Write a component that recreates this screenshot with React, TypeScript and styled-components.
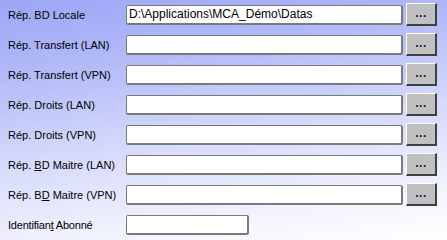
import React from 'react';
import styled, { createGlobalStyle } from 'styled-components';

const GlobalStyle = createGlobalStyle`
  html, body {
    margin: 0;
    padding: 0;
  }
  body {
    font-family: 'Liberation Sans', Arial, sans-serif;
  }
`;

type Field = {
  before: string;
  key?: string;
  after: string;
  value?: string;
  browse?: boolean;
  short?: boolean;
};

const fields: Field[] = [
  { before: 'Rép. BD Locale', after: '', value: 'D:\\Applications\\MCA_Démo\\Datas', browse: true },
  { before: 'Rép. Transfert (LAN)', after: '', browse: true },
  { before: 'Rép. Transfert (VPN)', after: '', browse: true },
  { before: 'Rép. Droits (LAN)', after: '', browse: true },
  { before: 'Rép. Droits (VPN)', after: '', browse: true },
  { before: 'Rép. ', key: 'B', after: 'D Maitre (LAN)', browse: true },
  { before: 'Rép. B', key: 'D', after: ' Maitre (VPN)', browse: true },
  { before: 'Identifian', key: 't', after: ' Abonné', short: true },
];

const App = (): React.ReactElement => (
  <Page>
    <GlobalStyle />
    {fields.map((f) => (
      <Row key={f.before + f.after}>
        <Label narrow={f.short}>
          {f.before}
          {f.key && <Access>{f.key}</Access>}
          {f.after}
        </Label>
        <TextBox short={f.short}>{f.value}</TextBox>
        {f.browse && <Browse>...</Browse>}
      </Row>
    ))}
  </Page>
);

const Page = styled.div`
  width: 447px;
  height: 240px;
  box-sizing: border-box;
  padding: 3px 10px 0 8px;
  display: flex;
  flex-direction: column;
  gap: 7px;
  background: linear-gradient(172deg, #9ca6f6 0%, #b2baf8 25%, #d6dafb 55%, #f4f5fe 85%, #ffffff 100%);
  overflow: hidden;
`;

const Row = styled.div`
  display: grid;
  grid-template-columns: 115px 1fr 31px;
  column-gap: 3px;
  align-items: center;
  height: 23px;
`;

const Label = styled.div<{ narrow?: boolean }>`
  font-size: 11px;
  color: #000;
  white-space: nowrap;
  font-family: ${({ narrow }) =>
    narrow ? "'Liberation Sans Narrow', 'Liberation Sans', Arial, sans-serif" : "'Liberation Sans', Arial, sans-serif"};
  letter-spacing: ${({ narrow }) => (narrow ? '-0.2px' : '0')};
`;

const Access = styled.span`
  text-decoration: underline;
`;

const TextBox = styled.div<{ short?: boolean }>`
  height: 20px;
  box-sizing: border-box;
  width: ${({ short }) => (short ? '123px' : 'auto')};
  background: #fff;
  border: 1px solid #7a7a7a;
  border-width: 1px 2px 2px 1px;
  border-radius: 2px;
  padding: 0 2px;
  font-size: 12px;
  line-height: 17px;
  color: #000;
  white-space: nowrap;
  overflow: hidden;
`;

const Browse = styled.div`
  height: 23px;
  box-sizing: border-box;
  background: #c0c0c0;
  border-top: 1px solid #fff;
  border-left: 1px solid #fff;
  border-right: 2px solid #404040;
  border-bottom: 2px solid #404040;
  display: flex;
  align-items: center;
  justify-content: center;
  font-size: 12px;
  font-weight: bold;
  color: #300848;
  letter-spacing: 0.5px;
  padding-bottom: 2px;
`;

export default App;
